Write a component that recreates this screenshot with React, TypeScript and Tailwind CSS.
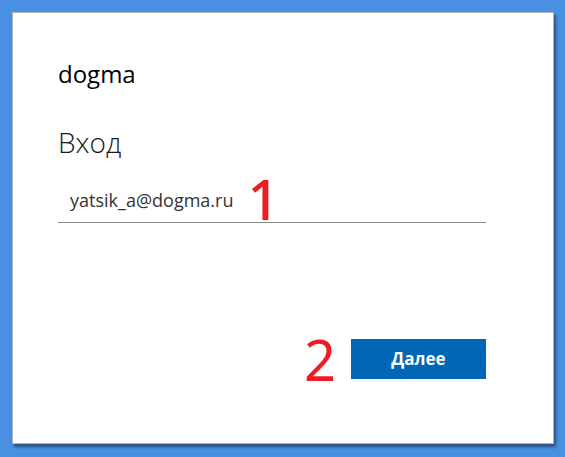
export default function App() {
  return (
    <div className="flex h-[457px] w-[565px] bg-[#4a90e2] pb-[13px] pl-[12px] pr-[11px] pt-[12px] font-['Open_Sans','Noto_Sans',sans-serif]">
      <div className="flex flex-1 flex-col border border-[#b4b4b4] bg-white pl-[45px] pr-[67px] shadow-[2px_3px_3px_rgba(0,0,0,0.45)]">
        <p className="mt-[47px] text-[24px] leading-[28px] text-black">dogma</p>
        <h1 className="mt-[36px] text-[28px] font-light leading-[36px] text-[#1b1b1b]">Вход</h1>
        <div className="mt-[14px] flex items-end border-b border-[#8a8a8a] pl-[12px]">
          <span className="mb-[10px] text-[18px] leading-[24px] text-[#333]">yatsik_a@dogma.ru</span>
          <span className="ml-[14px] font-['Noto_Sans',sans-serif] text-[56px] font-medium leading-[48px] text-[#ee1c25]">1</span>
        </div>
        <div className="mt-[112px] flex items-center justify-end">
          <span className="mr-[15px] font-['Noto_Sans',sans-serif] text-[56px] leading-[48px] text-[#ee1c25]">2</span>
          <button type="button" className="h-[40px] w-[135px] bg-[#0067b8] text-[17px] font-bold text-white">
            Далее
          </button>
        </div>
      </div>
    </div>
  );
}
